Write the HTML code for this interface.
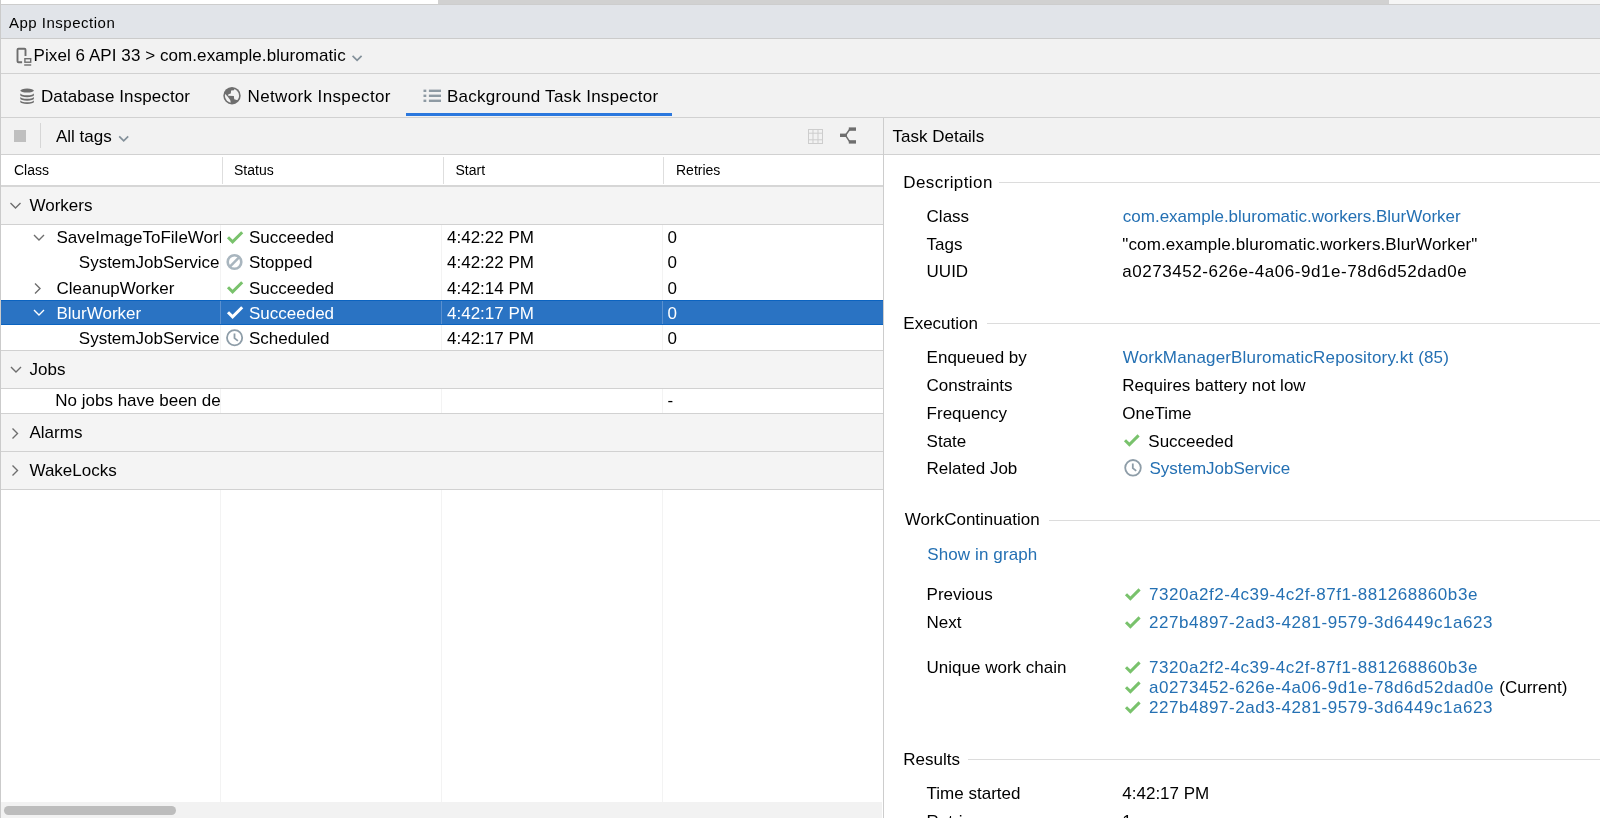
<!DOCTYPE html>
<html><head><meta charset="utf-8">
<style>
*{margin:0;padding:0;box-sizing:border-box}
html,body{width:1600px;height:818px;overflow:hidden;background:#fff}
body{position:relative;will-change:transform;font-family:"Liberation Sans",sans-serif;color:#000}
.a{position:absolute}
.t{position:absolute;white-space:nowrap;font-size:17px;line-height:20px}
.s14{font-size:14px;line-height:16px}
.s16{font-size:16px;line-height:20px}
.lnk{color:#2470b3}
.hl{position:absolute;height:1px;background:#d1d1d1}
.vl{position:absolute;width:1px;background:#d1d1d1}
.id{letter-spacing:0.55px}
svg{position:absolute;overflow:visible}
</style></head><body>
<!-- top strip -->
<div class="a" style="left:0;top:0;width:1600px;height:4px;background:#fff"></div>
<div class="a" style="left:438px;top:0;width:951px;height:4px;background:#d1d1d1"></div>
<div class="a" style="left:1389px;top:0;width:211px;height:4px;background:#f5f5f5"></div>
<div class="hl" style="left:0;top:4px;width:1600px;background:#cdcdcd"></div>
<!-- App Inspection header -->
<div class="a" style="left:0;top:5px;width:1600px;height:33px;background:#e1e4e9"></div>
<div class="t" style="left:9px;top:12.5px;font-size:15px;letter-spacing:0.5px">App Inspection</div>
<div class="hl" style="left:0;top:38px;width:1600px;background:#cbcbcb"></div>
<!-- device row -->
<div class="a" style="left:0;top:39px;width:1600px;height:34px;background:#f2f2f2"></div>
<svg style="left:0;top:0" width="1" height="1">
 <path d="M25.5 56V49.8q0-1-1-1h-6q-1 0-1 1v11.4q0 1 1 1h3.6" fill="none" stroke="#6e6e6e" stroke-width="1.9"/>
 <rect x="24.9" y="58.7" width="5.8" height="3.5" fill="none" stroke="#6e6e6e" stroke-width="1.4"/>
 <rect x="24.2" y="64.3" width="7" height="1.4" fill="#6e6e6e"/>
</svg>
<div class="t" style="left:33.6px;top:46px;letter-spacing:0.07px">Pixel 6 API 33 &gt; com.example.bluromatic</div>
<svg style="left:0;top:0" width="1" height="1"><path d="M352.6 55.8l4.5 4.5 4.5-4.5" fill="none" stroke="#83909a" stroke-width="1.7"/></svg>
<div class="hl" style="left:0;top:73px;width:1600px;background:#d1d1d1"></div>
<!-- tabs row -->
<div class="a" style="left:0;top:74px;width:1600px;height:43px;background:#f2f2f2"></div>
<svg style="left:0;top:0" width="1" height="1" fill="#6e6e6e">
 <ellipse cx="27.1" cy="90.6" rx="6.8" ry="2"/>
 <path d="M20.3 93.3A6.8 2 0 0 0 33.9 93.3v1.9A6.8 2 0 0 1 20.3 95.2z"/>
 <path d="M20.3 96.8A6.8 2 0 0 0 33.9 96.8v1.9A6.8 2 0 0 1 20.3 98.7z"/>
 <path d="M20.3 100.3A6.8 2 0 0 0 33.9 100.3v1.6A6.8 2 0 0 1 20.3 101.9z"/>
</svg>
<div class="t" style="left:41px;top:87px;letter-spacing:0.09px">Database Inspector</div>
<svg style="left:0;top:0" width="1" height="1">
 <defs><clipPath id="gc"><circle cx="232" cy="95.7" r="7.1"/></clipPath></defs>
 <circle cx="232" cy="95.7" r="8.7" fill="#6e6e6e"/>
 <g clip-path="url(#gc)" fill="#f2f2f2">
  <path d="M235.5 87.5L233.9 90.3L231.1 90.6L230.8 93.4L228.4 94.3L228.1 95.8L233.9 96.1L234.2 99.2L238.5 100.5L242 90L238 86Z"/>
  <path d="M223.5 93L225.3 94L227.8 96.8L230.2 100.1L231.1 104L222 104Z"/>
 </g>
</svg>
<div class="t" style="left:247.5px;top:87px;letter-spacing:0.375px">Network Inspector</div>
<svg style="left:0;top:0" width="1" height="1" fill="#8e9aa3">
 <rect x="423.5" y="89.6" width="2.8" height="2.4"/><rect x="428.9" y="89.6" width="12.1" height="2.4"/>
 <rect x="423.5" y="94.6" width="2.8" height="2.4"/><rect x="428.9" y="94.6" width="12.1" height="2.4"/>
 <rect x="423.5" y="99.6" width="2.8" height="2.4"/><rect x="428.9" y="99.6" width="12.1" height="2.4"/>
</svg>
<div class="t" style="left:447px;top:87px;letter-spacing:0.27px">Background Task Inspector</div>
<div class="a" style="left:406px;top:113px;width:266px;height:3px;background:#2b78de"></div>
<div class="hl" style="left:0;top:117px;width:1600px;background:#d1d1d1"></div>
<!-- toolbar row -->
<div class="a" style="left:0;top:118px;width:1600px;height:36px;background:#f2f2f2"></div>
<div class="a" style="left:14px;top:130px;width:12px;height:12px;background:#bfbfbf"></div>
<div class="a" style="left:40px;top:123px;width:1px;height:25px;background:#d6d6d6"></div>
<div class="t" style="left:56px;top:127px">All tags</div>
<svg style="left:0;top:0" width="1" height="1"><path d="M119.2 136.4l4.5 4.5 4.5-4.5" fill="none" stroke="#83909a" stroke-width="1.7"/></svg>
<svg style="left:0;top:0" width="1" height="1" fill="none" stroke="#cdcdcd" stroke-width="1">
 <rect x="808.5" y="129.5" width="14" height="14"/>
 <path d="M813 129.5v14M818 129.5v14M808.5 133v0M808.5 133.2h14M808.5 139.8h14"/>
</svg>
<svg style="left:0;top:0" width="1" height="1" fill="#6e6e6e">
 <rect x="840" y="133.6" width="7" height="3.4"/>
 <rect x="848.8" y="127.4" width="7.2" height="3.4"/>
 <rect x="848.8" y="140.2" width="7.2" height="3.4"/>
 <path d="M845.5 135.3L849.8 129.2M845.5 135.3L849.8 141.8" stroke="#6e6e6e" stroke-width="1.5"/>
</svg>
<div class="t" style="left:892.5px;top:127px">Task Details</div>
<div class="hl" style="left:0;top:154px;width:1600px;background:#d1d1d1"></div>
<div class="vl" style="left:883px;top:118px;height:700px;background:#cdcdcd"></div>
<!-- table header -->
<div class="a" style="left:1px;top:155px;width:882px;height:30px;background:#fff"></div>
<div class="t s14" style="left:14px;top:162px">Class</div>
<div class="t s14" style="left:234px;top:162px">Status</div>
<div class="t s14" style="left:455.5px;top:162px">Start</div>
<div class="t s14" style="left:676px;top:162px">Retries</div>
<div class="vl" style="left:222px;top:157px;height:27px;background:#dedede"></div>
<div class="vl" style="left:443px;top:157px;height:27px;background:#dedede"></div>
<div class="vl" style="left:663px;top:157px;height:27px;background:#dedede"></div>
<div class="a" style="left:1px;top:185px;width:882px;height:2px;background:#d6d6d6"></div>
<!-- Workers group -->
<div class="a" style="left:1px;top:187px;width:882px;height:37px;background:#f4f4f4"></div>
<svg style="left:0;top:0" width="1" height="1"><path d="M10.5 203l5 5 5-5" fill="none" stroke="#6e6e6e" stroke-width="1.4"/></svg>
<div class="t" style="left:29.5px;top:196px">Workers</div>
<div class="hl" style="left:1px;top:224px;width:882px"></div>
<!-- rows -->
<div class="a" style="left:1px;top:225px;width:882px;height:125px;background:#fff"></div>
<div class="vl" style="left:220px;top:225px;height:577px;background:#f3f3f3"></div>
<div class="vl" style="left:441px;top:225px;height:577px;background:#f3f3f3"></div>
<div class="vl" style="left:662px;top:225px;height:577px;background:#f3f3f3"></div>
<!-- selected row -->
<div class="a" style="left:1px;top:300px;width:882px;height:25px;background:#2a73c3;border-top:1px solid #0b63c0;border-bottom:1px solid #0b63c0"></div>
<div class="vl" style="left:220px;top:301px;height:23px;background:#5a90cf"></div>
<div class="vl" style="left:441px;top:301px;height:23px;background:#5a90cf"></div>
<div class="vl" style="left:662px;top:301px;height:23px;background:#5a90cf"></div>
<!-- clip class col -->
<div class="a" style="left:0;top:225px;width:221px;height:200px;overflow:hidden">
 <svg style="left:0;top:0" width="1" height="1"><path d="M34 10l5 5 5-5" fill="none" stroke="#6e6e6e" stroke-width="1.4"/></svg>
 <div class="t" style="left:56.5px;top:3px">SaveImageToFileWorker</div>
 <div class="t" style="left:78.8px;top:28px">SystemJobService</div>
 <svg style="left:0;top:0" width="1" height="1"><path d="M35 58.5l5 5 -5 5" fill="none" stroke="#6e6e6e" stroke-width="1.4"/></svg>
 <div class="t" style="left:56.5px;top:53.5px">CleanupWorker</div>
 <svg style="left:0;top:0" width="1" height="1"><path d="M34 85l5 5 5-5" fill="none" stroke="#fff" stroke-width="1.4"/></svg>
 <div class="t" style="left:56.5px;top:79px;color:#fff">BlurWorker</div>
 <div class="t" style="left:78.8px;top:104px">SystemJobService</div>
 <div class="t" style="left:55.3px;top:165.5px">No jobs have been defined</div>
</div>
<!-- status col -->
<svg style="left:0;top:0" width="1" height="1">
 <path d="M228 237.2l4.6 4.6 9.6-9.6" fill="none" stroke="#79c26c" stroke-width="3"/>
 <circle cx="234.5" cy="262" r="6.8" fill="none" stroke="#a9b6bf" stroke-width="2.6"/>
 <path d="M239.3 257.2l-9.6 9.6" stroke="#a9b6bf" stroke-width="2.5"/>
 <path d="M228 312.2l4.6 4.6 9.6-9.6" fill="none" stroke="#fff" stroke-width="3"/>
 <circle cx="234.6" cy="337.8" r="7.6" fill="none" stroke="#8e9da8" stroke-width="1.8"/>
 <path d="M234.5 333.5v4.6l3.4 2.8" fill="none" stroke="#8e9da8" stroke-width="1.8"/>
 <path d="M228 287.2l4.6 4.6 9.6-9.6" fill="none" stroke="#79c26c" stroke-width="3"/>
</svg>
<div class="t" style="left:249px;top:228px">Succeeded</div>
<div class="t" style="left:249px;top:253px">Stopped</div>
<div class="t" style="left:249px;top:278.5px">Succeeded</div>
<div class="t" style="left:249px;top:304px;color:#fff">Succeeded</div>
<div class="t" style="left:249px;top:329px">Scheduled</div>
<div class="t" style="left:447px;top:228px">4:42:22 PM</div>
<div class="t" style="left:447px;top:253px">4:42:22 PM</div>
<div class="t" style="left:447px;top:278.5px">4:42:14 PM</div>
<div class="t" style="left:447px;top:304px;color:#fff">4:42:17 PM</div>
<div class="t" style="left:447px;top:329px">4:42:17 PM</div>
<div class="t" style="left:667.5px;top:228px">0</div>
<div class="t" style="left:667.5px;top:253px">0</div>
<div class="t" style="left:667.5px;top:278.5px">0</div>
<div class="t" style="left:667.5px;top:304px;color:#fff">0</div>
<div class="t" style="left:667.5px;top:329px">0</div>
<div class="hl" style="left:1px;top:350px;width:882px"></div>
<!-- Jobs group -->
<div class="a" style="left:1px;top:351px;width:882px;height:37px;background:#f4f4f4"></div>
<svg style="left:0;top:0" width="1" height="1"><path d="M11 367l5 5 5-5" fill="none" stroke="#6e6e6e" stroke-width="1.4"/></svg>
<div class="t" style="left:29.5px;top:360px">Jobs</div>
<div class="hl" style="left:1px;top:388px;width:882px"></div>
<div class="vl" style="left:220px;top:389px;height:25px;background:#f3f3f3"></div>
<div class="t" style="left:667.5px;top:391px">-</div>
<div class="hl" style="left:1px;top:413px;width:882px"></div>
<!-- Alarms group -->
<div class="a" style="left:1px;top:414px;width:882px;height:37px;background:#f4f4f4"></div>
<svg style="left:0;top:0" width="1" height="1"><path d="M12.5 428.5l5 5 -5 5" fill="none" stroke="#6e6e6e" stroke-width="1.4"/></svg>
<div class="t" style="left:29.5px;top:423px">Alarms</div>
<div class="hl" style="left:1px;top:451px;width:882px"></div>
<!-- WakeLocks group -->
<div class="a" style="left:1px;top:452px;width:882px;height:37px;background:#f4f4f4"></div>
<svg style="left:0;top:0" width="1" height="1"><path d="M12.5 465.5l5 5 -5 5" fill="none" stroke="#6e6e6e" stroke-width="1.4"/></svg>
<div class="t" style="left:29.5px;top:460.5px">WakeLocks</div>
<div class="hl" style="left:1px;top:489px;width:882px"></div>
<!-- bottom scrollbar -->
<div class="a" style="left:1px;top:802px;width:881px;height:16px;background:#f2f2f2"></div>
<div class="a" style="left:4px;top:806px;width:172px;height:9px;border-radius:5px;background:#bdbdbd"></div>
<!-- right panel -->
<div class="t " style="left:903.3px;top:172.5px;letter-spacing:0.4px">Description</div>
<div class="hl" style="left:999px;top:182px;width:601px;background:#dcdcdc"></div>
<div class="t " style="left:926.6px;top:207.1px;">Class</div>
<div class="t lnk" style="left:1122.8px;top:207.1px;">com.example.bluromatic.workers.BlurWorker</div>
<div class="t " style="left:926.6px;top:235.0px;">Tags</div>
<div class="t " style="left:1122.3px;top:235.0px;letter-spacing:0.12px">"com.example.bluromatic.workers.BlurWorker"</div>
<div class="t " style="left:926.6px;top:261.9px;">UUID</div>
<div class="t id" style="left:1122.3px;top:261.9px;">a0273452-626e-4a06-9d1e-78d6d52dad0e</div>
<div class="t " style="left:903.3px;top:313.8px;">Execution</div>
<div class="hl" style="left:987px;top:323px;width:613px;background:#dcdcdc"></div>
<div class="t " style="left:926.6px;top:348.3px;">Enqueued by</div>
<div class="t lnk" style="left:1122.8px;top:348.3px;letter-spacing:0.17px">WorkManagerBluromaticRepository.kt (85)</div>
<div class="t " style="left:926.6px;top:376.3px;">Constraints</div>
<div class="t " style="left:1122.3px;top:376.3px;">Requires battery not low</div>
<div class="t " style="left:926.6px;top:403.9px;">Frequency</div>
<div class="t " style="left:1122.3px;top:403.9px;">OneTime</div>
<div class="t " style="left:926.6px;top:431.5px;">State</div>
<div class="t " style="left:1148.3px;top:431.5px;">Succeeded</div>
<div class="t " style="left:926.6px;top:458.9px;">Related Job</div>
<div class="t lnk" style="left:1149.4px;top:458.9px;">SystemJobService</div>
<div class="t " style="left:904.8px;top:510.0px;">WorkContinuation</div>
<div class="hl" style="left:1049px;top:520px;width:551px;background:#dcdcdc"></div>
<div class="t lnk" style="left:927.2px;top:545.0px;letter-spacing:0.12px">Show in graph</div>
<div class="t " style="left:926.6px;top:585.3px;">Previous</div>
<div class="t lnk id" style="left:1149px;top:585.3px;">7320a2f2-4c39-4c2f-87f1-881268860b3e</div>
<div class="t " style="left:926.6px;top:613.0px;">Next</div>
<div class="t lnk id" style="left:1149px;top:613.0px;">227b4897-2ad3-4281-9579-3d6449c1a623</div>
<div class="t " style="left:926.6px;top:658.1px;">Unique work chain</div>
<div class="t lnk id" style="left:1149px;top:658.1px;">7320a2f2-4c39-4c2f-87f1-881268860b3e</div>
<div class="t id" style="left:1149px;top:678.3px;"><span class="lnk">a0273452-626e-4a06-9d1e-78d6d52dad0e</span> <span style="letter-spacing:0">(Current)</span></div>
<div class="t lnk id" style="left:1149px;top:698.3px;">227b4897-2ad3-4281-9579-3d6449c1a623</div>
<div class="t " style="left:903.3px;top:749.6px;">Results</div>
<div class="hl" style="left:968px;top:759px;width:632px;background:#dcdcdc"></div>
<div class="t " style="left:926.6px;top:784.2px;">Time started</div>
<div class="t " style="left:1122.3px;top:784.2px;">4:42:17 PM</div>
<div class="t " style="left:926.6px;top:811.8px;">Retries</div>
<div class="t " style="left:1122.3px;top:811.8px;">1</div>
<svg style="left:0;top:0" width="1" height="1"><path d="M1125 440.2l4.4 4.4 9.2-9.2" fill="none" stroke="#79c26c" stroke-width="3"/><circle cx="1133" cy="467.8" r="7.8" fill="none" stroke="#8e9da8" stroke-width="1.8"/><path d="M1132.8 463.5v4.6l3.4 2.8" fill="none" stroke="#8e9da8" stroke-width="1.8"/><path d="M1126 594.2l4.4 4.4 9.2-9.2" fill="none" stroke="#79c26c" stroke-width="3"/><path d="M1126 622.2l4.4 4.4 9.2-9.2" fill="none" stroke="#79c26c" stroke-width="3"/><path d="M1126 667.2l4.4 4.4 9.2-9.2" fill="none" stroke="#79c26c" stroke-width="3"/><path d="M1126 687.2l4.4 4.4 9.2-9.2" fill="none" stroke="#79c26c" stroke-width="3"/><path d="M1126 707.2l4.4 4.4 9.2-9.2" fill="none" stroke="#79c26c" stroke-width="3"/></svg>
<!-- left border -->
<div class="a" style="left:0;top:0;width:1px;height:818px;background:#cbcbcb"></div>
</body></html>
